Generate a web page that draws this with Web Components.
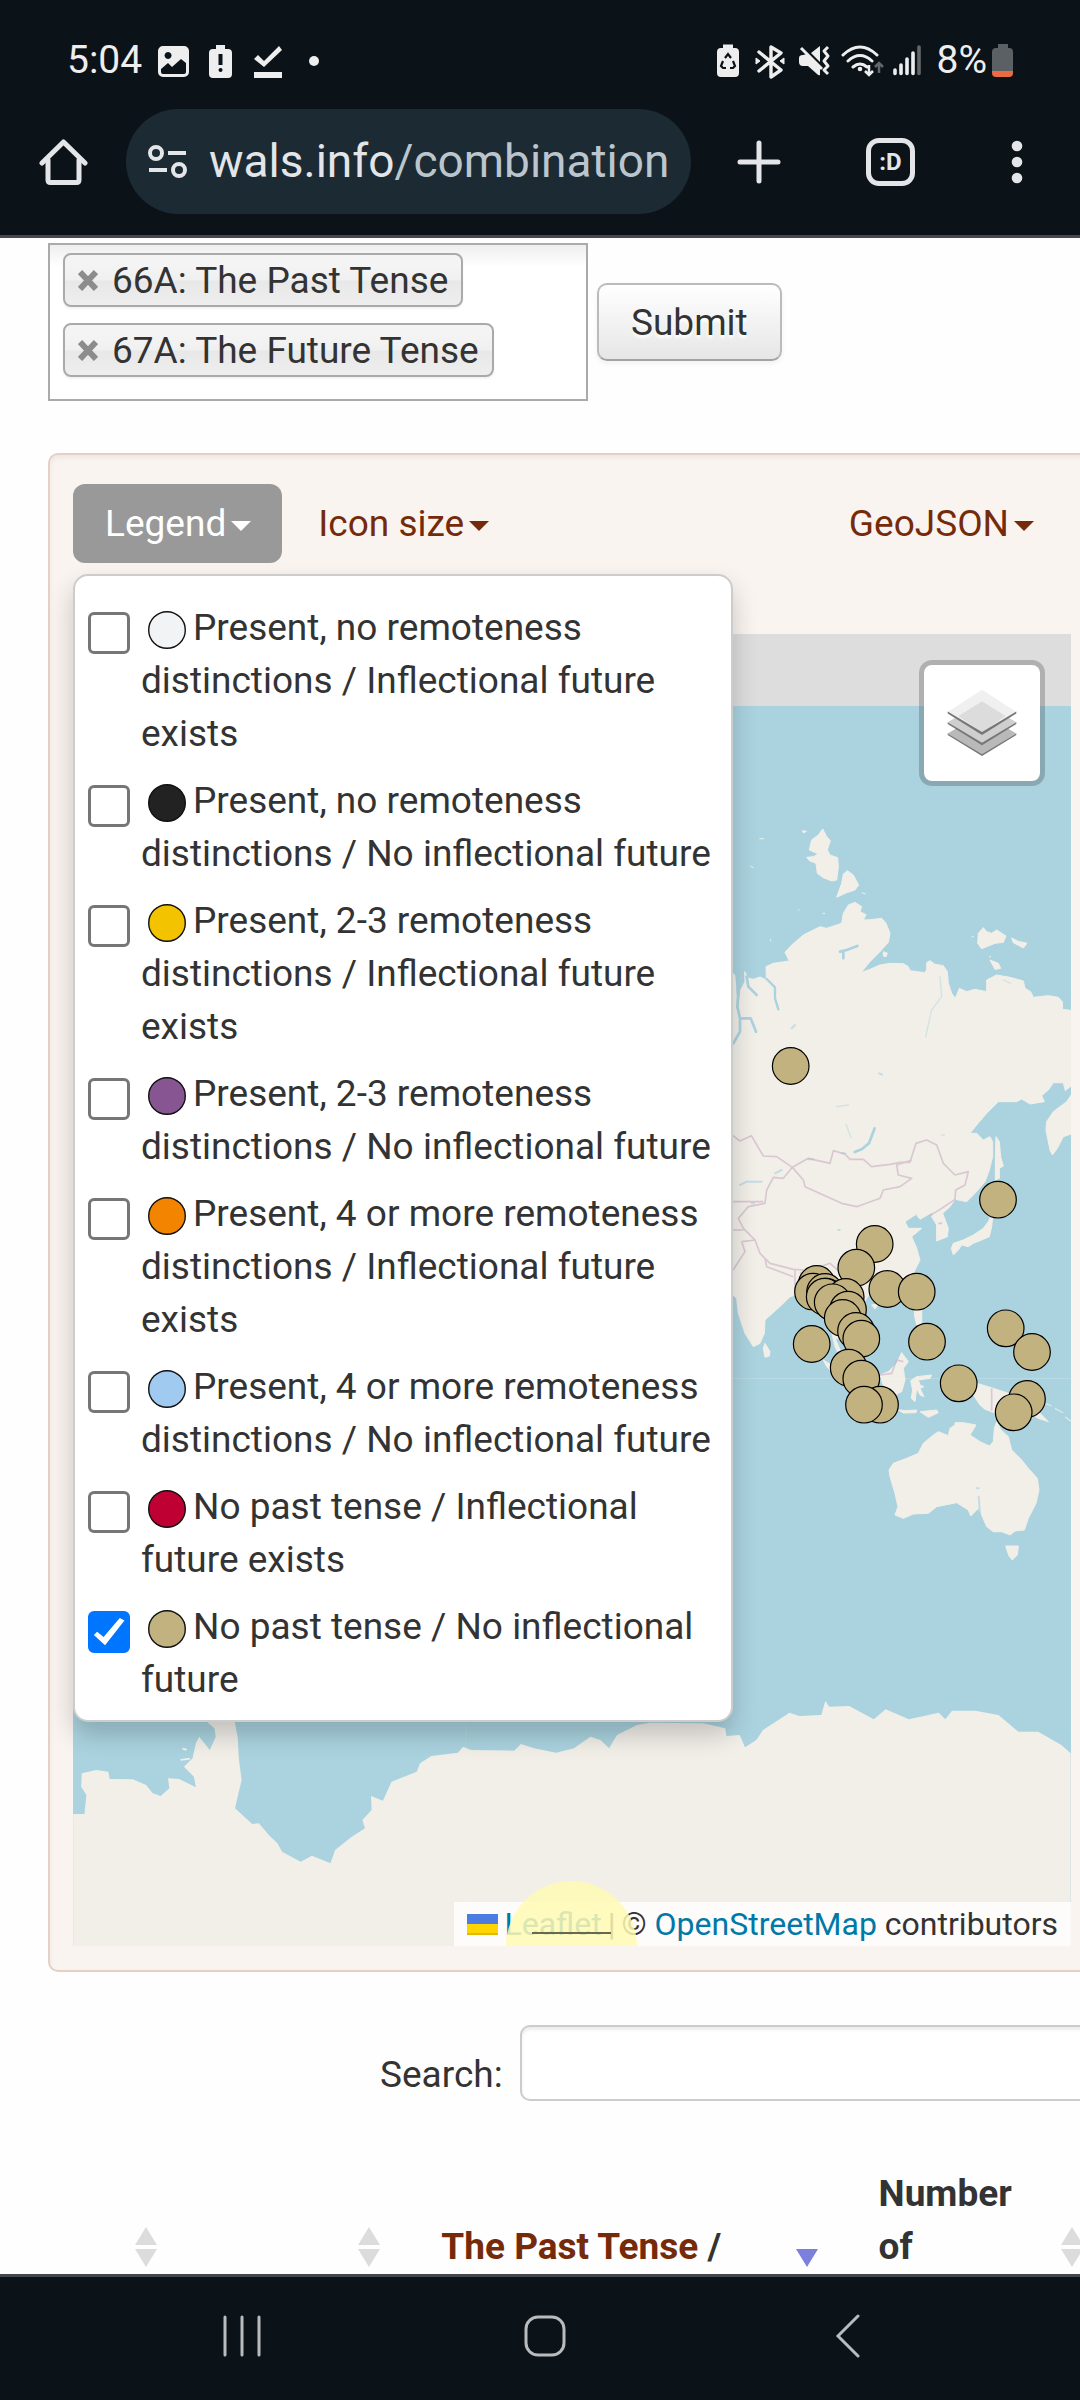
<!DOCTYPE html>
<html lang="en">
<head>
<meta charset="utf-8">
<meta name="viewport" content="width=device-width">
<title>WALS combination</title>
<style>
  body { margin: 0; height: 100vh; display: flex; flex-direction: column; overflow: hidden; background: #fefefe; color: #333; font: 37px/53px Roboto, "Liberation Sans", sans-serif; }
  main { flex: 1; min-height: 0; overflow: hidden; padding: 5px 0 0 48px; }
</style>
</head>
<body>
<status-bar></status-bar>
<browser-toolbar></browser-toolbar>
<main>
  <feature-form>
    <feature-chip>66A: The Past Tense</feature-chip>
    <feature-chip>67A: The Future Tense</feature-chip>
  </feature-form>
  <map-panel>
    <world-map slot="map"></world-map>
    <legend-item slot="legend" color="#f1f3f4">Present, no remoteness distinctions / Inflectional future exists</legend-item>
    <legend-item slot="legend" color="#222222">Present, no remoteness distinctions / No inflectional future</legend-item>
    <legend-item slot="legend" color="#f3c300">Present, 2-3 remoteness distinctions / Inflectional future exists</legend-item>
    <legend-item slot="legend" color="#875692">Present, 2-3 remoteness distinctions / No inflectional future</legend-item>
    <legend-item slot="legend" color="#f38400">Present, 4 or more remoteness distinctions / Inflectional future exists</legend-item>
    <legend-item slot="legend" color="#a1caf1">Present, 4 or more remoteness distinctions / No inflectional future</legend-item>
    <legend-item slot="legend" color="#be0032">No past tense / Inflectional future exists</legend-item>
    <legend-item slot="legend" color="#c2b280" checked>No past tense / No inflectional future</legend-item>
  </map-panel>
  <table-search></table-search>
  <language-table></language-table>
</main>
<system-nav></system-nav>

<script>
const define = (name, html, setup) => {
  const template = document.createElement('template');
  template.innerHTML = '<style>*{box-sizing:border-box}button{font:inherit;color:inherit;border:0;background:none;padding:0;margin:0}svg{display:block}</style>' + html;
  customElements.define(name, class extends HTMLElement {
    constructor() {
      super();
      this.attachShadow({ mode: 'open' }).append(template.content.cloneNode(true));
    }
    connectedCallback() { if (setup) setup(this, this.shadowRoot); }
  });
};

define('status-bar', `
<style>
  :host { display: flex; align-items: center; justify-content: space-between; height: 109px; padding: 12px 66px 0 67px; background: #0b1218; color: #eee; font-size: 39px; box-sizing: border-box; }
  div { display: flex; align-items: center; }
  .left { gap: 14px; }
  .right { gap: 4px; }
</style>
<div class="left"><span>5:04</span>
<svg width="166" height="36" viewBox="156 43 166 36" fill="#eee">
  <path fill-rule="evenodd" d="M163 46h21a5 5 0 0 1 5 5v21a5 5 0 0 1-5 5h-21a5 5 0 0 1-5-5v-21a5 5 0 0 1 5-5zM161 69v3q0 2 2 2h21q2 0 2-2v-9l-5-4-9 8-4-4zM168 52a3.5 3.5 0 1 0 .1 0z"/>
  <path fill-rule="evenodd" d="M216 45h9v4h3q4 0 4 4v21q0 4-4 4h-15q-4 0-4-4v-21q0-4 4-4h3zM218.500 54v11h4v-11zM220.500 68a2 2 0 1 0 .1 0z"/>
  <path d="M254 59l4-4 6 6 15-15 3 4-18 17zM254 72h28v6h-28z"/>
  <circle cx="314" cy="61" r="5"/>
</svg></div>
<div class="right">
<svg width="217" height="36" viewBox="716 43 217 36" fill="#eee">
  <path d="M723 44.500h10v3.500h2q4 0 4 4v21q0 4-4 4h-14q-4 0-4-4v-21q0-4 4-4h2z"/>
  <path d="M725 58l3-4 3 4M733 61l2 5-2 2h-3M726 68h-3l-2-2 2-5" fill="none" stroke="#0b1218" stroke-width="2.200"/>
  <path d="M759 52l22 18-10 7v-30l10 6-22 18" fill="none" stroke="#eee" stroke-width="3.400" stroke-linejoin="round" stroke-linecap="round"/>
  <path d="M756 58l4 3-4 3zM784 58l-4 3 4 3z" stroke="#eee"/>
  <path d="M799 58q0-3 4-3l4-1 13 13v8q-1 1-3-1l-9-8h-5q-4 0-4-4zM811 53l9-7v16z"/>
  <path d="M801 48l21 21M828 47l-4 4 4 5-4 5 4 5-4 4 4 4" fill="none" stroke="#eee" stroke-width="3" stroke-linejoin="round"/>
  <path d="M843 55q17-16 34 0M848 61q12-11 24 0M853 67q7-6 14 0" fill="none" stroke="#eee" stroke-width="3" stroke-linecap="round"/>
  <circle cx="860" cy="69" r="2.300"/>
  <path d="M869 65v10M865 71l4 4 4-4" fill="none" stroke="#eee" stroke-width="2.500"/>
  <path d="M879 73v-10M875 67l4-4 4 4" fill="none" stroke="#62676b" stroke-width="2.500"/>
  <path d="M895 70v3.500M901 65v8.500M907 59v14.500M913 53v20.500" stroke="#eee" stroke-width="3.600" stroke-linecap="round"/>
  <path d="M919 47v26.500" stroke="#62676b" stroke-width="3.600" stroke-linecap="round"/>
</svg>
<span>8%</span>
<svg width="23" height="36" viewBox="991 43 23 36"><path d="M998 44h10v4h1q4 0 4 4v19h-21v-19q0-4 4-4h2z" fill="#5b6064"/><path d="M992 71h21v2q0 4-4 4h-13q-4 0-4-4z" fill="#ea6b40"/></svg>
</div>`);

define('browser-toolbar', `
<style>
  :host { display: flex; align-items: center; box-sizing: border-box; height: 129px; padding: 0 57px 21px 38px; border-bottom: 3px solid #45494f; background: #0b1218; color: #e3e5e8; gap: 38px; }
  .url { flex: 1; min-width: 0; display: flex; align-items: center; gap: 20px; height: 105px; padding: 0 20px 0 21px; border-radius: 53px; background: #1b2a33; font-size: 46px; white-space: nowrap; overflow: hidden; }
  .url svg { flex: none; }
  .path { color: #bcc5cd; }
  .actions { display: flex; align-items: center; gap: 85px; padding-left: 8px; }
  .tabs { width: 49px; height: 48px; border: 5px solid #e3e5e8; border-radius: 13px; font-weight: bold; font-size: 24px; line-height: 36px; text-align: center; }
  .more { padding-left: 11px; }
</style>
<button aria-label="Home"><svg width="50" height="50" viewBox="38 137 50 50" fill="none" stroke="#e3e5e8" stroke-width="5" stroke-linejoin="round" stroke-linecap="round"><path d="M42 163l21.500-21 21.500 21"/><path d="M48 160v20q0 2.500 2.500 2.500h26q2.500 0 2.500-2.500v-20"/></svg></button>
<div class="url"><svg width="42" height="36" viewBox="147 144 42 36" fill="none" stroke="#e3e5e8" stroke-width="4"><circle cx="156" cy="153" r="6"/><path d="M168 153h18M149 170h18"/><circle cx="179" cy="170" r="6"/></svg><span><span>wals.info</span><span class="path">/combination</span></span></div>
<div class="actions">
<button aria-label="New tab"><svg width="44" height="44" viewBox="0 0 44 44" stroke="#e3e5e8" stroke-width="5" stroke-linecap="round"><path d="M22 3v38M3 22h38"/></svg></button>
<button class="tabs" aria-label="Tabs">:D</button>
<button class="more" aria-label="Menu"><svg width="12" height="44" viewBox="0 0 12 44" fill="#e3e5e8"><circle cx="6" cy="6" r="5.300"/><circle cx="6" cy="22" r="5.300"/><circle cx="6" cy="38" r="5.300"/></svg></button>
</div>`);

define('feature-form', `
<style>
  :host { display: block; }
  form { display: flex; align-items: center; gap: 9px; }
  .box { width: 50vw; min-height: 158px; display: flex; flex-direction: column; align-items: flex-start; gap: 16px; padding: 8px 13px 22px; border: 2px solid #aaa; background: linear-gradient(#eee, #fff 22px); }
  .submit { height: 78px; padding: 0 32px; border: 2px solid #bbb; border-bottom-color: #a2a2a2; border-radius: 10px; background: linear-gradient(#fff, #e6e6e6); text-shadow: 0 3px 3px #fff; box-shadow: 0 3px 5px #0000000d; }
</style>
<form><div class="box"><slot></slot></div><button class="submit" type="button">Submit</button></form>`);

define('feature-chip', `
<style>
  :host { display: flex; align-items: center; gap: 14px; box-sizing: border-box; height: 54px; padding: 0 13px; border: 2px solid #aaa; border-radius: 8px; background: linear-gradient(#f4f4f4 20%, #f0f0f0 50%, #e8e8e8 52%, #eee); box-shadow: 0 2px 2px #0000000d; }
</style>
<button type="button" aria-label="Remove"><svg width="20" height="22" viewBox="0 0 20 22" stroke="#8c8c8c" stroke-width="6"><path d="M2 3l16 17M18 3L2 20"/></svg></button>
<span><slot></slot></span>`);

define('map-panel', `
<style>
  :host { display: block; margin: 52px -16px 0 0; }
  section { padding: 29px 23px 24px; border: 2px solid #e6cfc3; border-radius: 10px; background: #faf4f0; box-shadow: inset 0 3px 5px #0000000d; }
  nav { position: relative; display: flex; align-items: center; margin-bottom: 71px; color: #752b0a; }
  nav > button, nav > a { height: 79px; padding: 0 31px 0 32px; display: flex; align-items: center; gap: 5px; color: inherit; text-decoration: none; }
  nav > button { background: #999; color: #fff; border-radius: 12px; margin-right: 4px; }
  nav > a:last-of-type { margin-left: auto; padding-right: 37px; }
  i { border: 10px solid transparent; border-top-color: currentColor; border-bottom: 0; margin-top: 5px; }
  .menu { position: absolute; z-index: 2; top: 100%; left: 0; width: 660px; margin-top: 11px; padding: 25px 6px 14px 13px; display: flex; flex-direction: column; gap: 14px; background: #fff; border: 2px solid #ccc; border-radius: 15px; box-shadow: 0 13px 26px #00000033; color: #333; }
</style>
<section>
<nav><button aria-expanded="true">Legend<i></i></button><a href="#size">Icon size<i></i></a><a href="#geojson">GeoJSON<i></i></a>
<div class="menu"><slot name="legend"></slot></div></nav>
<slot name="map"></slot>
</section>`);

define('legend-item', `
<style>
  :host { display: flex; align-items: flex-start; gap: 11px; }
  input { appearance: none; flex: none; width: 42px; height: 42px; margin: 11px 0 0; border: 3px solid #767676; border-radius: 6px; background: #fff; }
  input:checked { background: #0075ff; border-color: #0075ff; }
  input:checked::before { content: ""; display: block; width: 36px; height: 36px; background: #fff; clip-path: polygon(8% 58%, 17% 49%, 35% 64%, 80% 11%, 93% 18%, 39% 87%); }
  svg { display: inline-block; width: 38px; height: 38px; vertical-align: middle; margin: 0 7px; }
</style>
<input type="checkbox" id="pick"><label for="pick"><svg viewBox="0 0 38 38"><circle cx="19" cy="19" r="18.300" stroke="#111" stroke-width="1.400"/></svg><slot></slot></label>`,
(host, root) => {
  root.querySelector('circle').setAttribute('fill', host.getAttribute('color'));
  root.querySelector('input').checked = host.hasAttribute('checked');
});

define('world-map', `
<style>
  :host { display: block; position: relative; overflow: hidden; background: #ddd; }
  .tiles { width: 100%; height: auto; }
  .layers { position: absolute; top: 26px; right: 26px; width: 126px; height: 126px; border: 5px solid #0003; border-radius: 13px; background: #fff; background-clip: padding-box; display: grid; place-items: center; }
  .credit { position: absolute; right: 0; bottom: 0; height: 44px; padding: 0 13px; display: flex; align-items: center; gap: 6px; background: #fffc; font-size: 32px; line-height: 44px; white-space: nowrap; }
  a { color: #0078a8; text-decoration: none; }
  .flag { width: 31px; height: 21px; background: linear-gradient(#4c7be1 48%, #ffd500 48% 90%, #e0bc00 90%); }
  .ripple { position: absolute; left: 433px; bottom: -66px; width: 131px; height: 131px; border-radius: 50%; background: #fff9b3d9; display: grid; place-items: center; }
  .ripple::after { content: ""; width: 79px; height: 2px; margin-top: -27px; background: #66694f; }
</style>
<svg class="tiles" viewBox="73 634 998 1312">
  <path fill="#aad3df" d="M73 706h998v1240H73z"/>
  <g transform="translate(720 780) scale(.333333)" stroke-linejoin="round">
    <g fill="#f2efe9" stroke="#f2efe9" stroke-width="3">
    <path d="M0 575L39 580L48 590L48 640L55 690L62 630L75 605L74 575L84 594L100 598L120 591L139 600L138 560L160 550L208 543L195 517L215 495L250 465L300 440L320 445L365 430L370 400L385 375L405 367L425 380L420 395L438 404L430 420L450 419L485 415L498 430L510 460L505 487L480 515L450 545L423 578L450 568L480 555L510 550L550 551L565 560L570 572L614 578L620 570L620 548L630 542L645 553L670 557L682 575L685 610L695 640L706 655L718 625L740 635L765 628L800 635L800 600L830 585L870 592L910 603L915 625L932 635L940 652L985 647L1015 652L1027 665L1028 688L1060 692L1060 912L1036 932L1030 908L1000 908L985 930L965 947L973 965L930 972L905 957L890 965L835 965L800 1000L770 1035L750 1060L770 1060L790 1080L810 1070L818 1085L818 1130L808 1170L795 1205L765 1240L740 1265L705 1258L690 1280L668 1300L685 1345L682 1370L650 1383L650 1335L635 1310L640 1295L600 1318L590 1305L605 1292L570 1315L555 1325L565 1345L605 1345L575 1370L590 1405L600 1440L580 1480L545 1510L500 1525L450 1540L430 1570L445 1640L425 1700L395 1715L370 1680L345 1675L365 1720L390 1765L370 1750L345 1700L338 1670L325 1620L290 1595L265 1590L245 1540L210 1550L185 1575L135 1620L133 1660L120 1690L100 1700L75 1660L55 1600L50 1555L39 1545L0 1520z"/>
    <path d="M308 147L320 170L331 182L322 210L330 225L353 233L355 260L350 300L335 303L310 293L292 280L288 250L268 242L260 232L280 230L295 222L268 210L275 180L295 165zM382 272L400 285L416 315L405 330L380 338L350 352L365 310L370 282zM247 152l12 2-8 5zM118 176h14M90 258l10 5M425 338l12 4M307 400h8M235 390h4M152 478v6M790 443L800 455L815 460L830 450L858 468L850 487L825 490L800 500L785 506L773 490L775 460zM875 474L895 484L921 490L910 504L880 488zM810 540L835 550L842 565L825 568zM807 530h6M490 515l12 5-4 10-8-2zM755 470h6"/>
    <path d="M1060 935L1040 965L1000 995L980 1025L978 1050L990 1110L997 1125L1012 1105L1030 1070L1060 1060zM828 1070L838 1085L842 1130L850 1158L838 1165L838 1195L826 1200L826 1130zM820 1290L815 1340L808 1370L785 1380L760 1390L745 1400L725 1395L715 1410L700 1425L694 1405L700 1390L730 1380L760 1365L790 1345L805 1325z"/>
    <path d="M585 1580L605 1585L605 1630L590 1635L583 1605zM455 1575l22-4-12 16zM135 1690L150 1715L148 1728L135 1732L130 1705zM310 1740L350 1765L395 1800L425 1855L420 1870L390 1840L350 1790L320 1760zM480 1785L505 1775L530 1750L545 1718L565 1745L550 1765L555 1800L545 1835L525 1845L495 1830zM572 1802L590 1790L635 1785L630 1795L595 1800L600 1815L612 1820L600 1825L612 1850L600 1845L590 1825L585 1865L574 1855L578 1830zM535 1890L560 1892L590 1890L588 1898L550 1899zM600 1895L650 1890L655 1898L625 1912zM680 1810L755 1805L820 1825L865 1840L900 1880L960 1900L985 1925L955 1915L910 1890L870 1905L820 1897L795 1888L780 1875L760 1845L715 1835z"/>
    <path d="M975 1870l20 8M1005 1885l25 14M1035 1910l20 15" fill="none" stroke-width="4" opacity=".7"/>
    <path d="M705 1928L720 1928L730 1928L768 1935L750 1965L780 1985L808 1998L820 1985L823 1945L830 1925L843 1950L865 1970L875 2010L905 2040L925 2065L952 2095L957 2130L948 2170L925 2215L913 2250L885 2253L870 2265L845 2255L820 2255L800 2240L785 2205L777 2190L780 2180L752 2208L745 2190L710 2168L650 2180L625 2200L580 2202L550 2215L525 2205L534 2180L525 2140L510 2090L507 2070L520 2050L560 2035L595 2020L610 1990L640 1965L655 1955L685 1967L690 1945L705 1935zM857 2298L895 2298L892 2325L877 2340L867 2328z"/>
    </g>
    <g fill="none" stroke="#aad3df" stroke-width="9" stroke-linecap="round">
      <path d="M140 597L165 622L165 655L175 688" stroke-width="7"/><path d="M50 590L55 640L52 680L60 715L60 755L40 790M62 715L92 715L108 755M80 590L85 620L110 645M360 515L380 510L412 498M370 515v20" stroke-width="8"/>
      <path d="M404 1116L425 1108L447 1090L464 1045" stroke-width="8"/><path d="M770 2125h6M776 2150l5 60M60 1215l20-10h45M165 1180l20-10M265 1138h15M95 1270h8M215 745l10-10M478 880l8 4M355 1350h4M365 1120h10" stroke-width="6" opacity=".65"/>
      <path d="M660 590L665 650L635 690L617 770M350 980l35-5M378 1033l15 40M665 1065h8M850 600l22 10" stroke-width="4" opacity=".45"/>
    </g>
    <g fill="none" stroke="#cdb2c7" stroke-width="5" opacity=".65">
      <path d="M0 1060L39 1067L60 1083L94 1067L130 1128L170 1130L217 1162L265 1135L330 1150L340 1112L375 1122L390 1138L430 1138L455 1160L510 1153L540 1147L570 1147L588 1090L620 1080L650 1095L670 1150L705 1185L745 1175L735 1215L707 1230L705 1258L665 1285L630 1307"/>
      <path d="M217 1162L190 1195L160 1192L140 1230L135 1270L85 1280L55 1315L70 1345L105 1380L120 1420L150 1450L220 1468L250 1470M217 1162L250 1200L255 1220L310 1245L365 1270L410 1280L480 1255L490 1230L540 1220L575 1195L535 1185L530 1155L575 1140M39 1265L130 1265M39 1350L70 1350M65 1385L105 1380M65 1385L75 1415L39 1470M135 1435L140 1460L220 1490M225 1470V1525M240 1480L330 1450L365 1480M480 1785L515 1780L530 1740L550 1745M815 1825V1892M655 1330h12"/>
    </g>
    <path d="M39 1796H1053" stroke="#fff" stroke-width="2" opacity=".3"/>
  </g>
  <g transform="translate(40 1680) scale(.663265 .333333)">
    <path fill="#f2efe9" d="M50 402L67 402L70 345L62 320L63 280L85 270L103 275L105 297L140 298L160 315L170 340L182 348L195 325L193 295L210 297L235 322L232 290L217 260L230 235L235 190L240 170L256 210L265 170L263 145L253 128L275 90H290L298 170L300 240L304 300L298 350L294 385L320 432L330 430L345 465L358 490L365 515L393 545L410 527L438 550L445 510L470 470L490 445L486 420L500 390L499 348L517 362L530 305L568 275L573 250L590 228L630 218L638 200L650 210L715 212L725 192L745 205L778 218L805 205L830 170L845 180L858 205L870 165L900 135L920 128L1000 130L1033 145L1035 168L1055 165L1063 202L1080 180L1090 150L1130 98L1145 108L1178 105L1184 63L1190 80L1220 78L1257 118L1275 88L1310 118L1355 98L1365 118L1375 92L1410 92L1445 105L1475 155L1505 155L1540 195L1554 220V800H50z"/>
    <path d="M215 205l6 5M212 240l14-4" stroke="#f2efe9" stroke-width="5"/>
    <path d="M642 130V665" stroke="#fff" stroke-width="1" opacity=".25"/>
  </g>
  <g class="pins" fill="#c2b280" stroke="#000" stroke-width="1.200"></g>
</svg>
<button class="layers" aria-label="Layers"><svg width="70" height="68" viewBox="502 781 208 202">
  <path d="M504 913l102-60 102 60-102 65z" fill="#b9b9b9"/><path d="M504 913l102 62 102-62v5l-102 62-102-62z" fill="#777"/>
  <path d="M504 880l102-60 102 60-102 64z" fill="#cfcfcf"/><path d="M504 880l102 61 102-61v5l-102 63-102-63z" fill="#777"/>
  <path d="M504 849l102-66 102 66-102 65z" fill="#f0f0f0"/><path d="M536 861l70-44 70 44-70 49z" fill="#dcdcdc"/><path d="M504 848l102 61 102-61v6l-102 64-102-64z" fill="#777"/></svg></button>
<div class="credit"><span class="flag"></span><a href="#leaflet">Leaflet</a><span>|</span><span>© <a href="#osm">OpenStreetMap</a> contributors</span></div>
<div class="ripple"></div>`,
(host, root) => {
  const pins = [[790.7,1066],[998,1199.700],[874.700,1244],[856.300,1267.700],[887.300,1289],[916.700,1291.700],[816.700,1284],[813,1291.700],[825,1292],[826,1296.700],[824.700,1296.700],[845.700,1297],[832.700,1302.300],[848,1309.700],[842.700,1318],[856,1331],[861.300,1338.700],[811.700,1344],[927,1341.700],[1005.700,1328.300],[1032,1352],[848.700,1367.700],[861.300,1378.700],[880,1404.700],[864,1404.700],[958.700,1383.300],[1027,1399],[1013.700,1412.300]];
  root.querySelector('.pins').innerHTML = pins.map(([x, y]) => '<circle cx="' + x + '" cy="' + y + '" r="18.300"/>').join('');
});

define('table-search', `
<style>
  :host { display: flex; align-items: flex-end; gap: 17px; margin: 53px -48px 0 332px; }
  input { flex: 1; min-width: 0; height: 76px; border: 2px solid #ccc; border-radius: 10px; background: #fff; box-shadow: inset 0 3px 3px #00000013; font: inherit; padding: 0 16px; }
</style>
<label for="q">Search:</label><input id="q" type="text">`);

define('language-table', `
<style>
  :host { display: block; margin: 66px -9px 0 0; }
  table { width: 100%; table-layout: fixed; border-collapse: collapse; }
  th { padding: 0 6px 0 55px; text-align: left; vertical-align: bottom; }
  th.bare { padding-left: 0; }
  div { display: flex; align-items: flex-end; justify-content: space-between; }
  button { margin-bottom: 6px; }
  a { color: #752b0a; text-decoration: none; }
</style>
<table><colgroup><col style="width:11%"><col style="width:21.500%"><col style="width:42%"><col></colgroup>
<thead><tr>
<th class="bare"><div><span></span><button class="both" aria-label="Sort"></button></div></th>
<th class="bare"><div><span></span><button class="both" aria-label="Sort"></button></div></th>
<th><div><span><a href="#past">The Past Tense</a> /</span><button class="down" aria-label="Sort"></button></div></th>
<th><div><span>Number<br>of</span><button class="both" aria-label="Sort"></button></div></th>
</tr></thead></table>`,
(host, root) => {
  root.querySelectorAll('button').forEach(b => {
    const both = b.className === 'both';
    b.innerHTML = '<svg width="22" height="40" viewBox="0 0 22 40">' + (both ? '<path fill="#dcdcdc" d="M11 0l11 18H0zM0 22h22L11 40z"/>' : '<path fill="#7b80dc" d="M0 22h22L11 40z"/>') + '</svg>';
  });
});

define('system-nav', `
<style>
  :host { display: flex; align-items: center; justify-content: space-between; box-sizing: border-box; height: 126px; padding: 0 211px 6px 221px; border-top: 3px solid #42484e; background: #0b1218; }
  svg { fill: none; stroke: #b9bcbf; stroke-width: 3; stroke-linecap: round; }
</style>
<button aria-label="Recents"><svg width="42" height="44" viewBox="0 0 42 44"><path d="M4 3v38M21 3v38M38 3v38"/></svg></button>
<button aria-label="Home"><svg width="44" height="44" viewBox="0 0 44 44"><rect x="3" y="3" width="38" height="38" rx="12"/></svg></button>
<button aria-label="Back"><svg width="42" height="44" viewBox="0 0 42 44"><path d="M31 2L11 22l20 20"/></svg></button>`);
</script>
</body>
</html>
